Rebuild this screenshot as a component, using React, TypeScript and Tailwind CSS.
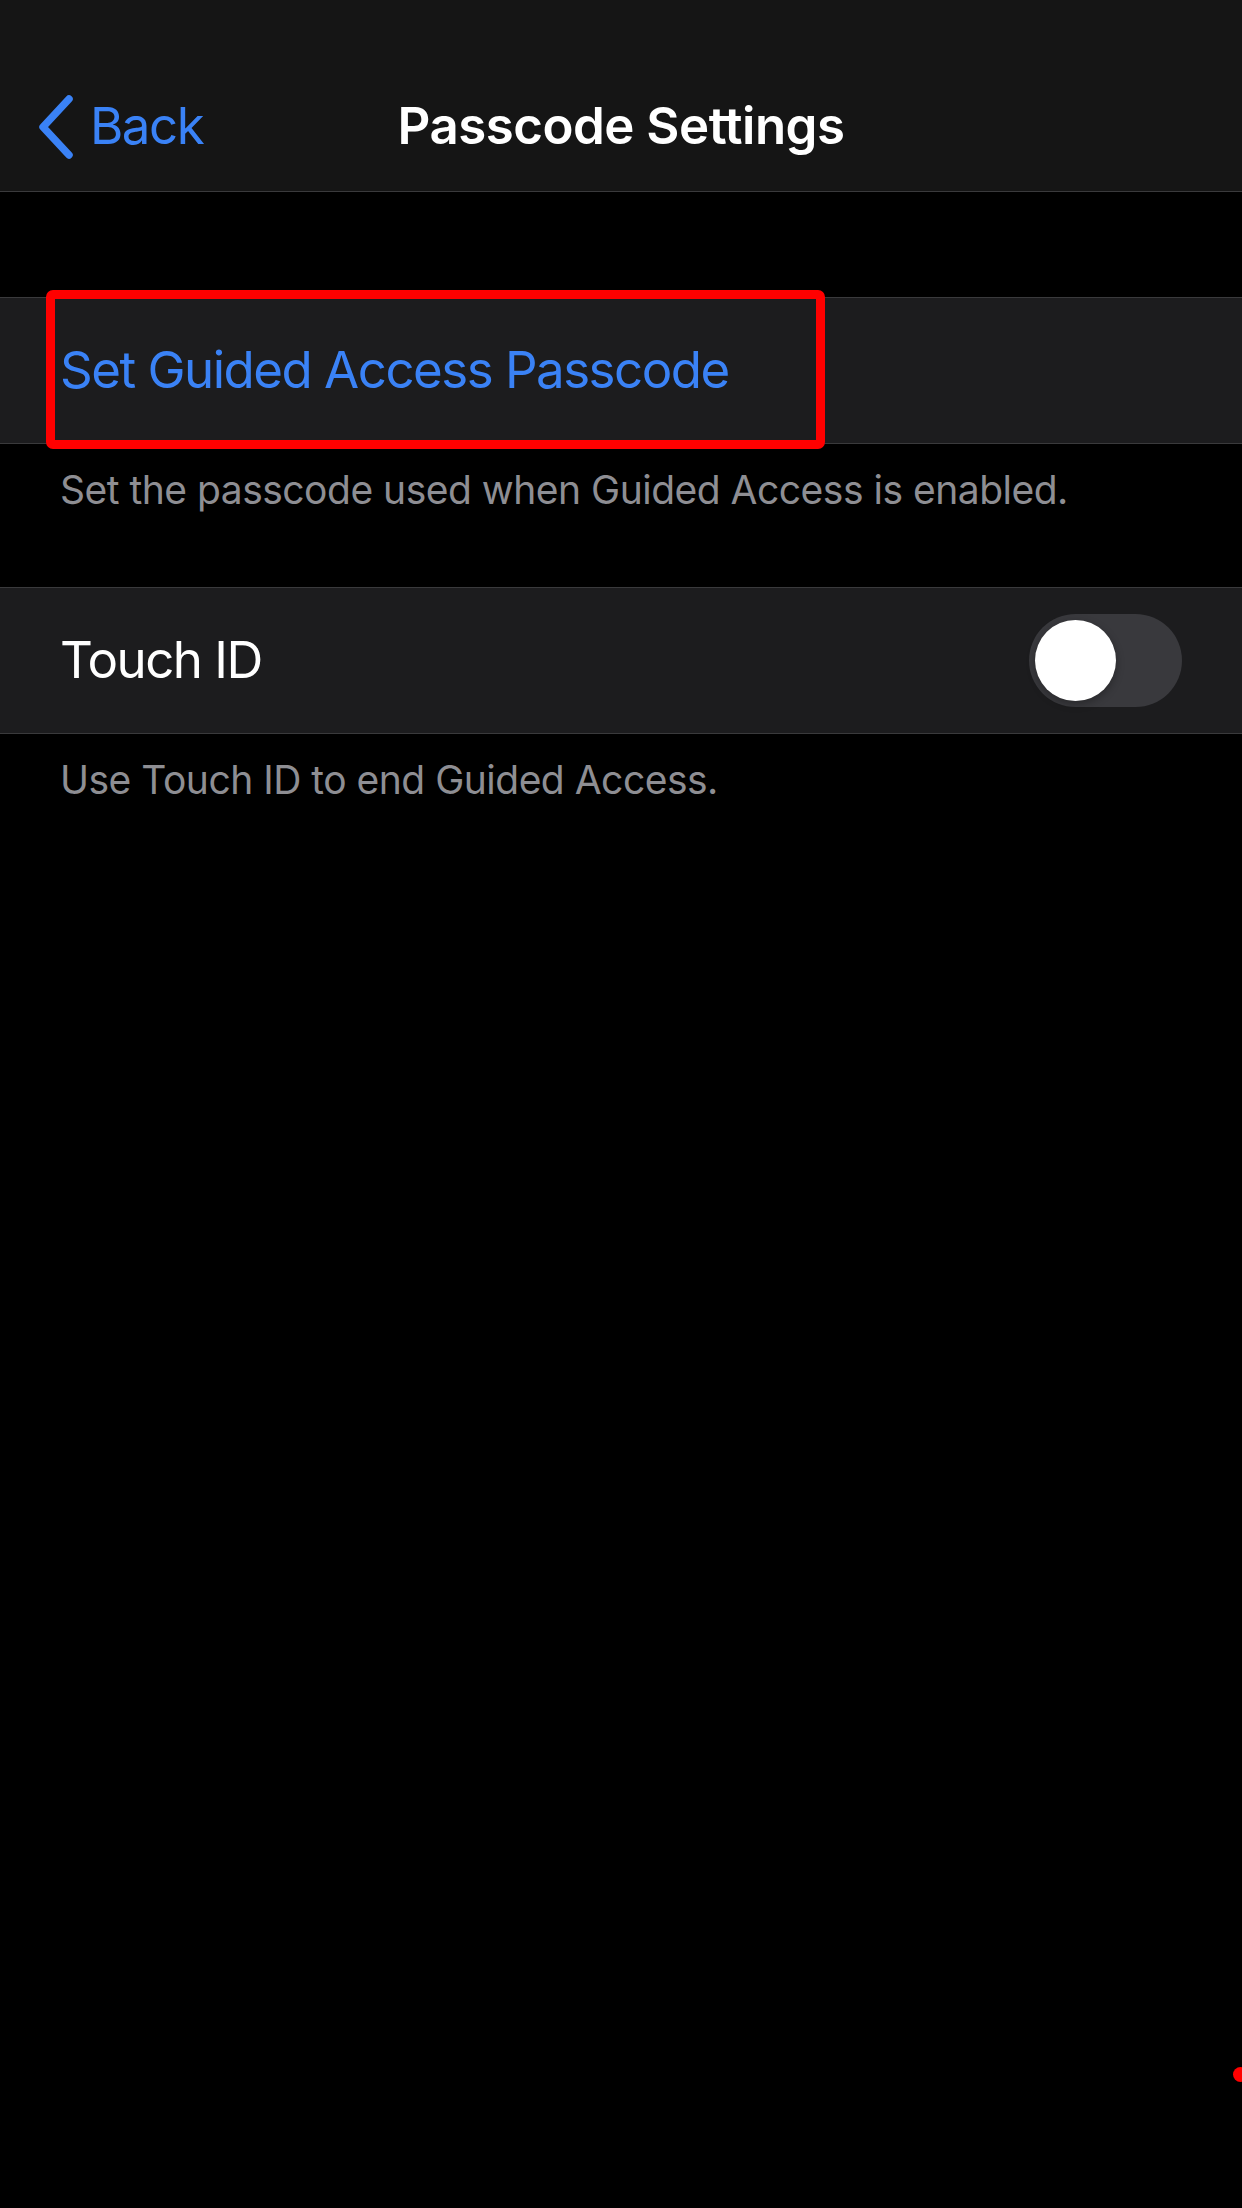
const font = { fontFamily: "Inter, 'Noto Sans', sans-serif" };

const BackChevron = () => (
  <svg width="40" height="66" viewBox="0 0 40 66" fill="none">
    <path
      d="M33 5 L7 33 L33 61"
      stroke="#3a82f6"
      strokeWidth="7.5"
      strokeLinecap="round"
      strokeLinejoin="round"
    />
  </svg>
);

const Toggle = () => (
  <div className="w-[153px] h-[93px] rounded-full bg-[#39393d] p-[6px] flex items-center">
    <div className="w-[81px] h-[81px] rounded-full bg-white shadow-[0_3px_8px_rgba(0,0,0,0.3)]" />
  </div>
);

const App = () => {
  return (
    <div
      className="relative w-full h-[2208px] bg-black overflow-hidden text-white"
      style={font}>
      <header className="h-[192px] bg-[#151515] border-b border-[#3a3a3c] pt-[62px] flex items-center relative">
        <div className="flex items-center pl-[36px] gap-[14px] text-[#3a82f6] text-[51px] tracking-[-1.5px]">
          <BackChevron />
          <span>Back</span>
        </div>
        <h1 className="absolute inset-x-0 text-center text-[51px] font-semibold tracking-[-0.5px]">
          Passcode Settings
        </h1>
      </header>

      <div className="h-[105px]" />

      <div className="relative">
        <div className="h-[147px] bg-[#1c1c1e] border-y border-[#3a3a3c] flex items-center px-[60px]">
          <span className="text-[51px] text-[#3a82f6] tracking-[-1.5px]">
            Set Guided Access Passcode
          </span>
        </div>
        <div className="absolute left-[46px] top-[-7px] w-[779px] h-[159px] border-[9px] border-[#ff0000] rounded-[7px]" />
      </div>

      <div className="h-[143px] px-[60px] pt-[17px]">
        <p className="text-[39px] text-[#8e8e93] tracking-[-0.5px]">
          Set the passcode used when Guided Access is enabled.
        </p>
      </div>

      <div className="h-[147px] bg-[#1c1c1e] border-y border-[#3a3a3c] flex items-center justify-between pl-[60px] pr-[60px]">
        <span className="text-[51px] tracking-[-1.5px]">Touch ID</span>
        <Toggle />
      </div>

      <div className="px-[60px] pt-[17px]">
        <p className="text-[39px] text-[#8e8e93] tracking-[-0.5px]">
          Use Touch ID to end Guided Access.
        </p>
      </div>

      <div className="absolute left-[1233px] top-[2067px] w-[15px] h-[15px] rounded-full bg-[#ff0000]" />
    </div>
  );
};

export default App;
